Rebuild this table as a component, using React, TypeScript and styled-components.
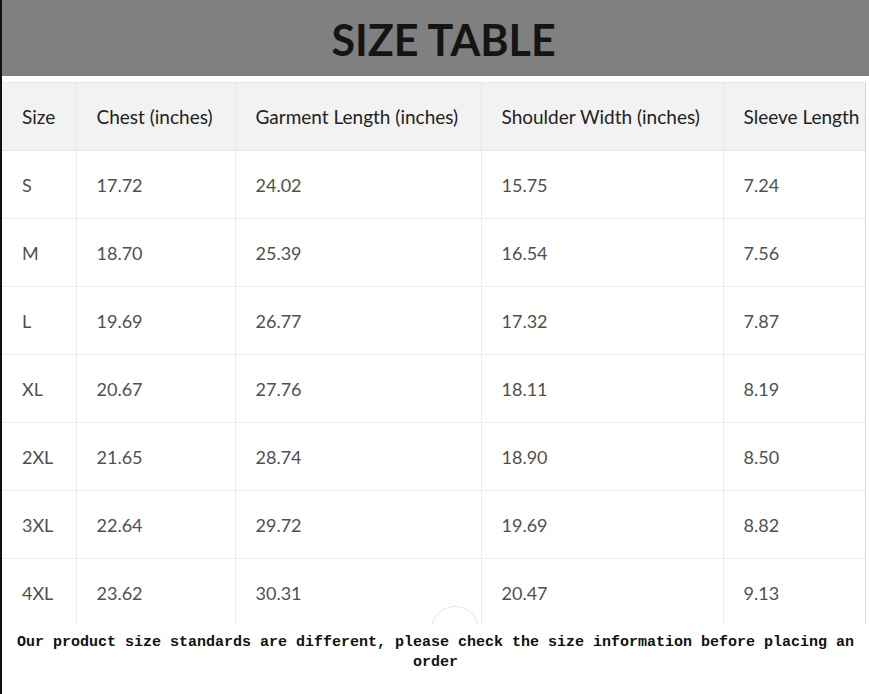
import styled, { createGlobalStyle } from "styled-components";

const GlobalStyle = createGlobalStyle`
  html, body {
    margin: 0;
    padding: 0;
    background: #ffffff;
  }
  * {
    box-sizing: border-box;
  }
`;

const sizes = [
  { size: "S", chest: "17.72", length: "24.02", shoulder: "15.75", sleeve: "7.24" },
  { size: "M", chest: "18.70", length: "25.39", shoulder: "16.54", sleeve: "7.56" },
  { size: "L", chest: "19.69", length: "26.77", shoulder: "17.32", sleeve: "7.87" },
  { size: "XL", chest: "20.67", length: "27.76", shoulder: "18.11", sleeve: "8.19" },
  { size: "2XL", chest: "21.65", length: "28.74", shoulder: "18.90", sleeve: "8.50" },
  { size: "3XL", chest: "22.64", length: "29.72", shoulder: "19.69", sleeve: "8.82" },
  { size: "4XL", chest: "23.62", length: "30.31", shoulder: "20.47", sleeve: "9.13" },
];

const columns = [
  { label: "Size", width: 74 },
  { label: "Chest (inches)", width: 159 },
  { label: "Garment Length (inches)", width: 246 },
  { label: "Shoulder Width (inches)", width: 242 },
  { label: "Sleeve Length (inches)", width: 250 },
];

const Page = styled.div`
  width: 869px;
  height: 694px;
  border-left: 2px solid #111;
  display: flex;
  flex-direction: column;
  overflow: hidden;
`;

const Banner = styled.div`
  height: 76px;
  flex-shrink: 0;
  background: #808080;
  display: flex;
  align-items: center;
  justify-content: center;
  padding-left: 16px;
  padding-top: 2px;
`;

const Title = styled.h1`
  margin: 0;
  font-family: Lato, "Noto Sans", sans-serif;
  font-weight: 700;
  font-size: 43px;
  line-height: 1;
  color: #141414;
`;

const TableWrap = styled.div`
  position: relative;
  margin-top: 6px;
  width: 864px;
  height: 542px;
  overflow: hidden;
  border-right: 1px solid #d8d8d8;
  flex-shrink: 0;
`;

const Table = styled.table`
  border-collapse: collapse;
  table-layout: fixed;
  width: 971px;
  font-family: Lato, "Noto Sans", sans-serif;
  font-size: 18px;
`;

const HeadCell = styled.th`
  height: 68px;
  padding: 0 0 0 20px;
  text-align: left;
  font-weight: 400;
  font-size: 19px;
  color: #222;
  background: #f2f2f2;
  border-top: 1px solid #e6e6e6;
  border-bottom: 1px solid #e6e6e6;
  border-left: 1px solid #e6e6e6;
  white-space: nowrap;

  &:first-child {
    border-left: none;
  }
`;

const Cell = styled.td`
  height: 68px;
  padding: 0 0 0 20px;
  color: #505050;
  border-bottom: 1px solid #ececec;
  border-left: 1px solid #ececec;
  white-space: nowrap;

  &:first-child {
    border-left: none;
  }
`;

const TopButton = styled.div`
  position: absolute;
  left: 429px;
  top: 524px;
  width: 48px;
  height: 48px;
  border-radius: 50%;
  border: 1px solid #e4e4e4;
  background: rgba(255, 255, 255, 0.6);
`;

const Note = styled.p`
  margin: 9px 0 0;
  text-align: center;
  font-family: "Liberation Mono", "Courier New", monospace;
  font-weight: 700;
  font-size: 15px;
  line-height: 20px;
  color: #111;
`;

export default function App() {
  return (
    <>
      <GlobalStyle />
      <Page>
        <Banner>
          <Title>SIZE TABLE</Title>
        </Banner>
        <TableWrap>
          <Table>
            <colgroup>
              {columns.map((c) => (
                <col key={c.label} style={{ width: c.width }} />
              ))}
            </colgroup>
            <thead>
              <tr>
                {columns.map((c) => (
                  <HeadCell key={c.label}>{c.label}</HeadCell>
                ))}
              </tr>
            </thead>
            <tbody>
              {sizes.map((r) => (
                <tr key={r.size}>
                  <Cell>{r.size}</Cell>
                  <Cell>{r.chest}</Cell>
                  <Cell>{r.length}</Cell>
                  <Cell>{r.shoulder}</Cell>
                  <Cell>{r.sleeve}</Cell>
                </tr>
              ))}
            </tbody>
          </Table>
          <TopButton />
        </TableWrap>
        <Note>
          Our product size standards are different, please check the size
          information before placing an order
        </Note>
      </Page>
    </>
  );
}
